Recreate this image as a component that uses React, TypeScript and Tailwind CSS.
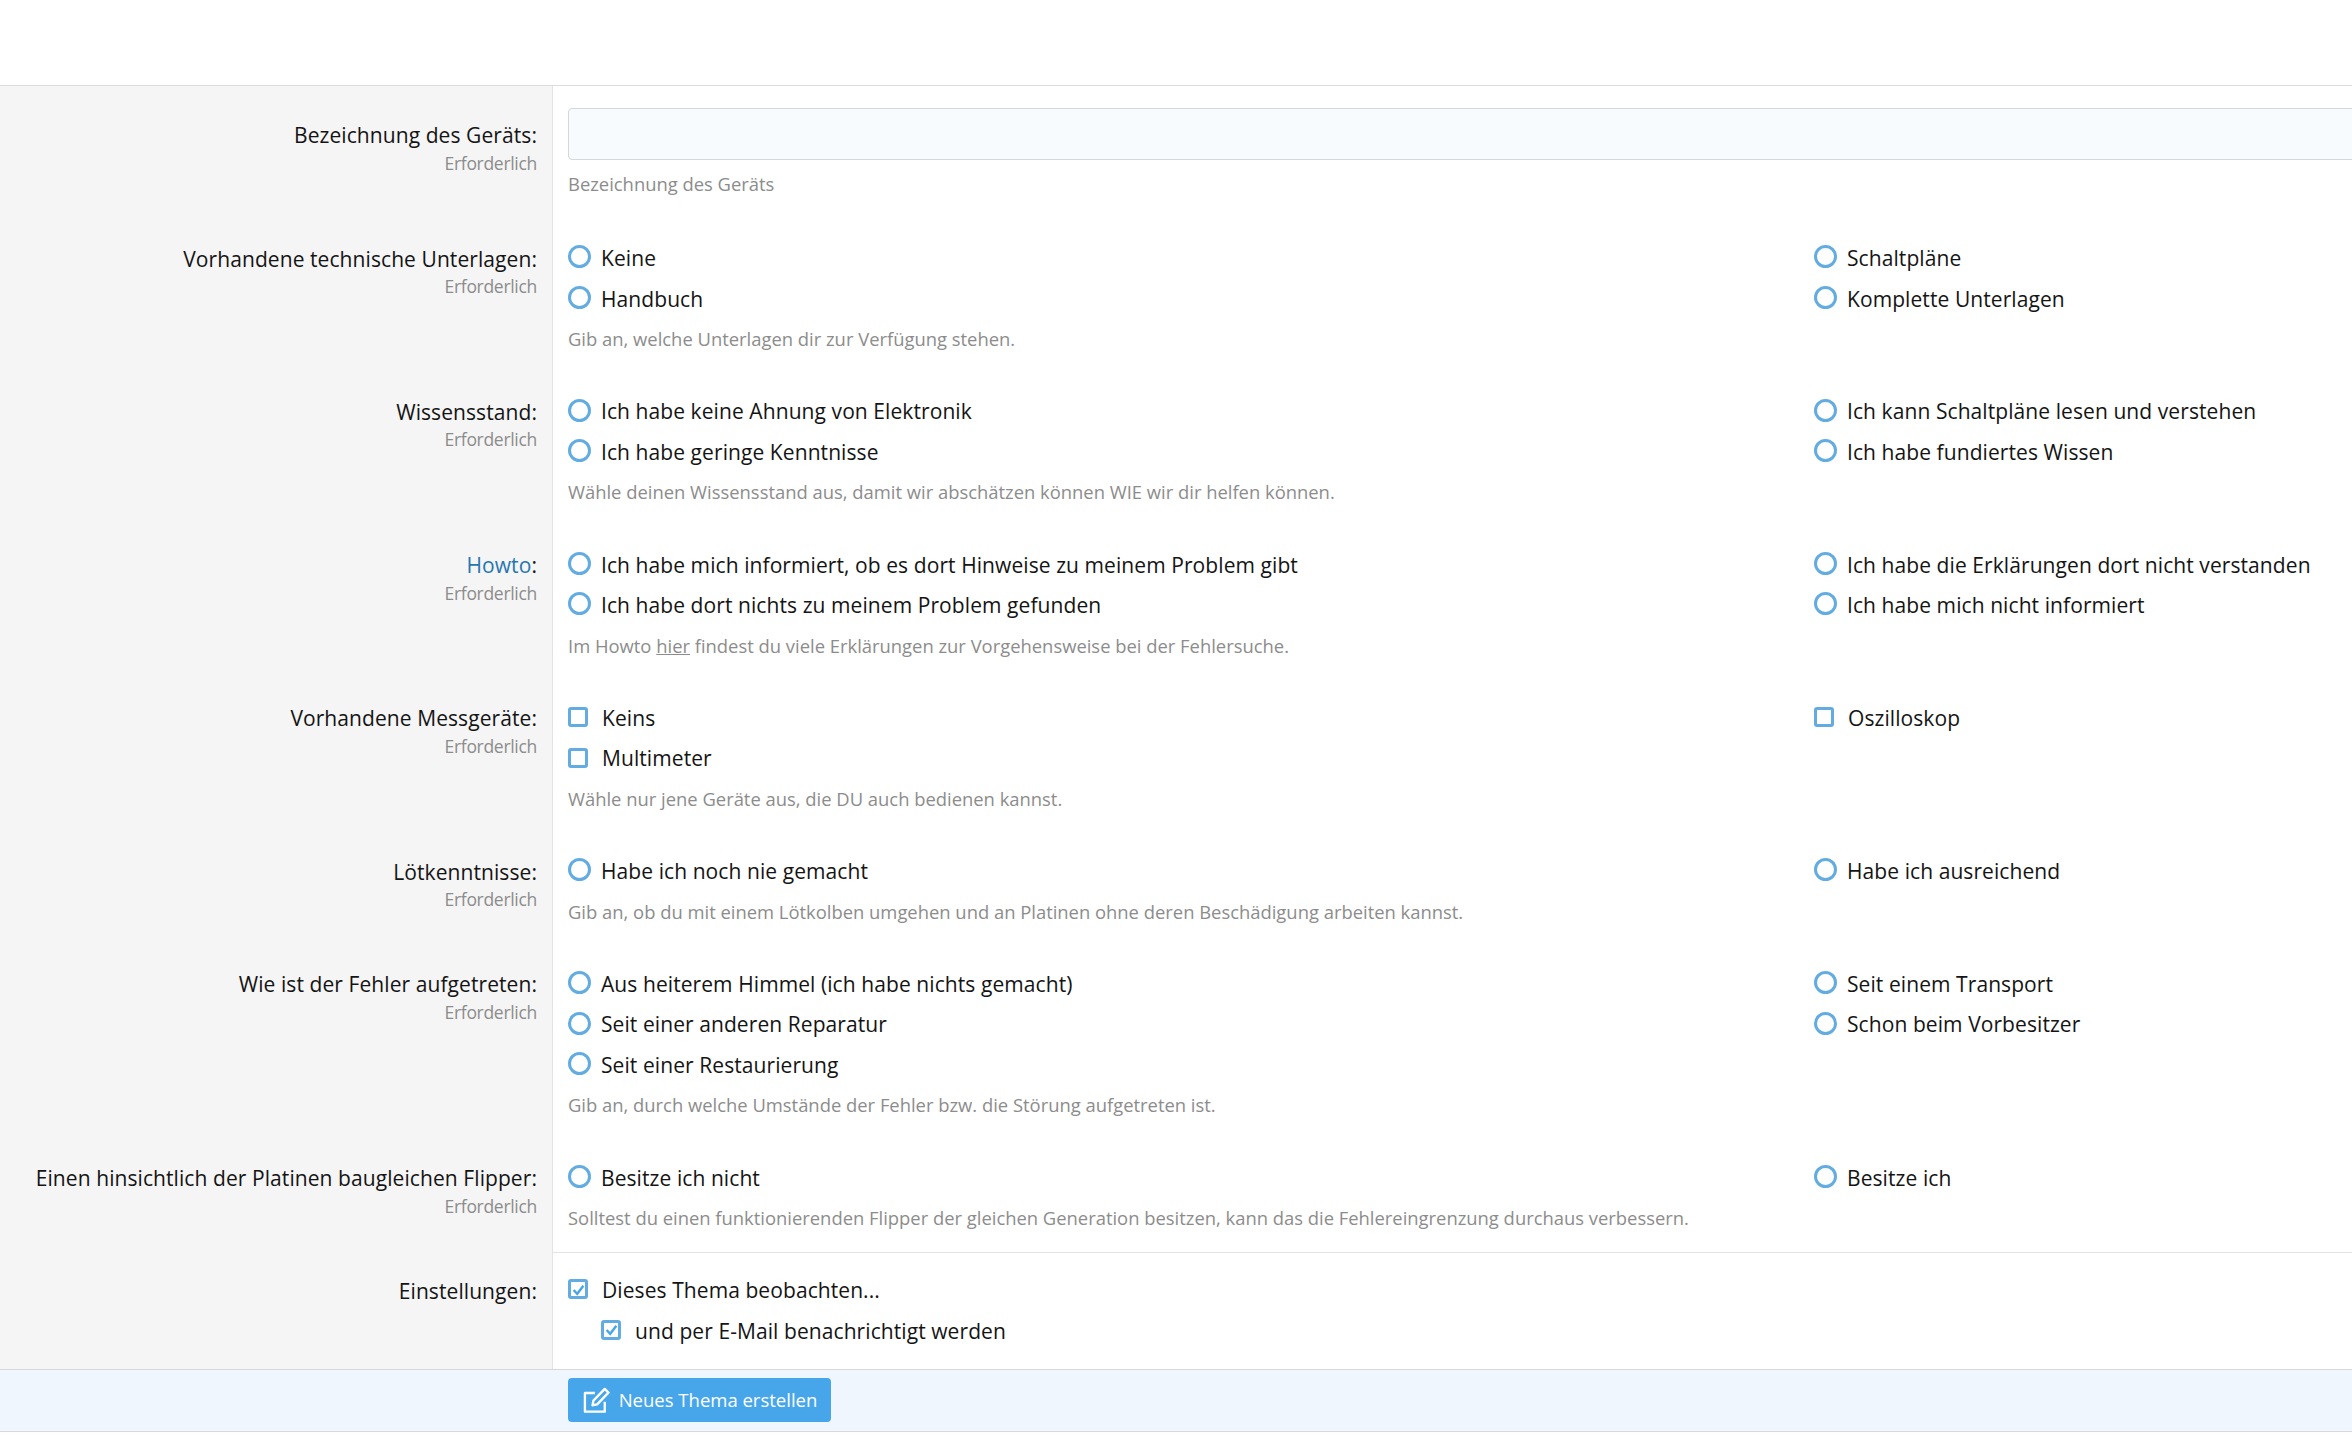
const sans = "font-['Open_Sans','Noto_Sans',sans-serif]";

function Radio() {
  return <span className="mt-[-4px] mr-[10px] h-[23px] w-[23px] shrink-0 rounded-full border-[3px] border-[#62ace2] bg-white" />;
}

function Box({ checked }: { checked?: boolean }) {
  return (
    <span className="mt-[-3px] mr-[14px] flex h-5 w-5 shrink-0 items-center justify-center rounded-[3px] border-[3px] border-[#62ace2] bg-white">
      {checked && (
        <svg viewBox="0 0 12 12" className="h-[13px] w-[13px]" fill="none" stroke="#47a6ea" strokeWidth="2.2">
          <path d="M1.5 6.5 L4.8 10 L10.5 2.5" />
        </svg>
      )}
    </span>
  );
}

function Option({ label, type = "radio", checked, indent }: { label: string; type?: "radio" | "box"; checked?: boolean; indent?: boolean }) {
  return (
    <div className={`flex h-[40.5px] items-center text-[21px] text-[#141414] ${indent ? "pl-[33px]" : ""}`}>
      {type === "radio" ? <Radio /> : <Box checked={checked} />}
      <span className="whitespace-nowrap tracking-[0.08px]">{label}</span>
    </div>
  );
}

function Hint({ children }: { children: React.ReactNode }) {
  return <div className="flex h-[39px] items-center whitespace-nowrap text-[18.4px] text-[#8c8c8c]">{children}</div>;
}

function Required() {
  return <div className="mt-[-6px] text-[17.5px] leading-[26px] tracking-[-0.3px] text-[#8c8c8c]">Erforderlich</div>;
}

function LabelText({ children }: { children: React.ReactNode }) {
  return <div className="whitespace-nowrap text-[21px] leading-[40.5px] tracking-[0.08px] text-[#141414]">{children}</div>;
}

type Row = {
  label: React.ReactNode;
  type?: "radio" | "box";
  left: string[];
  right: string[];
  hint: React.ReactNode;
  pb?: string;
};

const rows: Row[] = [
  {
    label: "Vorhandene technische Unterlagen:",
    left: ["Keine", "Handbuch"],
    right: ["Schaltpläne", "Komplette Unterlagen"],
    hint: "Gib an, welche Unterlagen dir zur Verfügung stehen.",
  },
  {
    label: "Wissensstand:",
    left: ["Ich habe keine Ahnung von Elektronik", "Ich habe geringe Kenntnisse"],
    right: ["Ich kann Schaltpläne lesen und verstehen", "Ich habe fundiertes Wissen"],
    hint: "Wähle deinen Wissensstand aus, damit wir abschätzen können WIE wir dir helfen können.",
  },
  {
    label: (
      <>
        <span className="text-[#2577b1]">Howto</span>:
      </>
    ),
    left: ["Ich habe mich informiert, ob es dort Hinweise zu meinem Problem gibt", "Ich habe dort nichts zu meinem Problem gefunden"],
    right: ["Ich habe die Erklärungen dort nicht verstanden", "Ich habe mich nicht informiert"],
    hint: (
      <span>
        Im Howto <span className="underline">hier</span> findest du viele Erklärungen zur Vorgehensweise bei der Fehlersuche.
      </span>
    ),
  },
  {
    label: "Vorhandene Messgeräte:",
    type: "box",
    left: ["Keins", "Multimeter"],
    right: ["Oszilloskop"],
    hint: "Wähle nur jene Geräte aus, die DU auch bedienen kannst.",
  },
  {
    label: "Lötkenntnisse:",
    left: ["Habe ich noch nie gemacht"],
    right: ["Habe ich ausreichend"],
    hint: "Gib an, ob du mit einem Lötkolben umgehen und an Platinen ohne deren Beschädigung arbeiten kannst.",
  },
  {
    label: "Wie ist der Fehler aufgetreten:",
    left: ["Aus heiterem Himmel (ich habe nichts gemacht)", "Seit einer anderen Reparatur", "Seit einer Restaurierung"],
    right: ["Seit einem Transport", "Schon beim Vorbesitzer"],
    hint: "Gib an, durch welche Umstände der Fehler bzw. die Störung aufgetreten ist.",
  },
  {
    label: "Einen hinsichtlich der Platinen baugleichen Flipper:",
    left: ["Besitze ich nicht"],
    right: ["Besitze ich"],
    hint: "Solltest du einen funktionierenden Flipper der gleichen Generation besitzen, kann das die Fehlereingrenzung durchaus verbessern.",
    pb: "pb-[14px]",
  },
];

export default function App() {
  return (
    <div className={`h-[1435px] w-[2352px] overflow-hidden bg-white ${sans}`}>
      <div className="h-[86px] border-b border-[#dcdcdc]" />

      {/* Titel */}
      <div className="flex">
        <div className="w-[553px] shrink-0 border-r border-[#e3e3e3] bg-[#f5f5f5] pt-[29px] pr-[15px] text-right">
          <LabelText>Bezeichnung des Geräts:</LabelText>
          <Required />
        </div>
        <div className="min-w-0 flex-1 pt-[22px] pb-[18.5px] pl-[15px]">
          <div className="h-[52px] w-[2600px] rounded-[4px] border border-[#d5d7da] bg-[#f8fbfe]" />
          <div className="mt-[4px]">
            <Hint>Bezeichnung des Geräts</Hint>
          </div>
        </div>
      </div>

      {rows.map((row, i) => (
        <div key={i} className="flex">
          <div className="w-[553px] shrink-0 border-r border-[#e3e3e3] bg-[#f5f5f5] pt-[17px] pr-[15px] text-right">
            <LabelText>{row.label}</LabelText>
            <Required />
          </div>
          <div className={`min-w-0 flex-1 pt-[17px] pl-[15px] ${row.pb ?? "pb-[16.25px]"}`}>
            <div className="grid grid-cols-[1246px_1fr]">
              <div>
                {row.left.map((o) => (
                  <Option key={o} label={o} type={row.type} />
                ))}
              </div>
              <div>
                {row.right.map((o) => (
                  <Option key={o} label={o} type={row.type} />
                ))}
              </div>
            </div>
            <Hint>{row.hint}</Hint>
          </div>
        </div>
      ))}

      {/* Einstellungen */}
      <div className="flex">
        <div className="w-[553px] shrink-0 border-r border-[#e3e3e3] bg-[#f5f5f5] pt-[19px] pr-[15px] text-right">
          <LabelText>Einstellungen:</LabelText>
        </div>
        <div className="min-w-0 flex-1 border-t border-[#e3e3e3] pt-[18px] pb-[17px] pl-[15px]">
          <Option label="Dieses Thema beobachten..." type="box" checked />
          <Option label="und per E-Mail benachrichtigt werden" type="box" checked indent />
        </div>
      </div>

      {/* Footer */}
      <div className="flex h-[63px] items-center border-y border-[#d8d8d8] bg-[#eff6fd] pl-[568px]">
        <button className="flex h-[44px] w-[263px] items-center justify-center gap-[9px] rounded-[4px] bg-[#47a6ea] text-[18.5px] text-white">
          <svg viewBox="0 0 24 24" className="h-[28px] w-[28px]" fill="none" stroke="white" strokeWidth="2" strokeLinejoin="round">
            <path d="M19.5 13.5V22H2.5V6H11" />
            <path d="M9 16.5l.8-4L19.5 2.5l3.2 3.2L13 15.7l-4 .8z" />
          </svg>
          Neues Thema erstellen
        </button>
      </div>
    </div>
  );
}
